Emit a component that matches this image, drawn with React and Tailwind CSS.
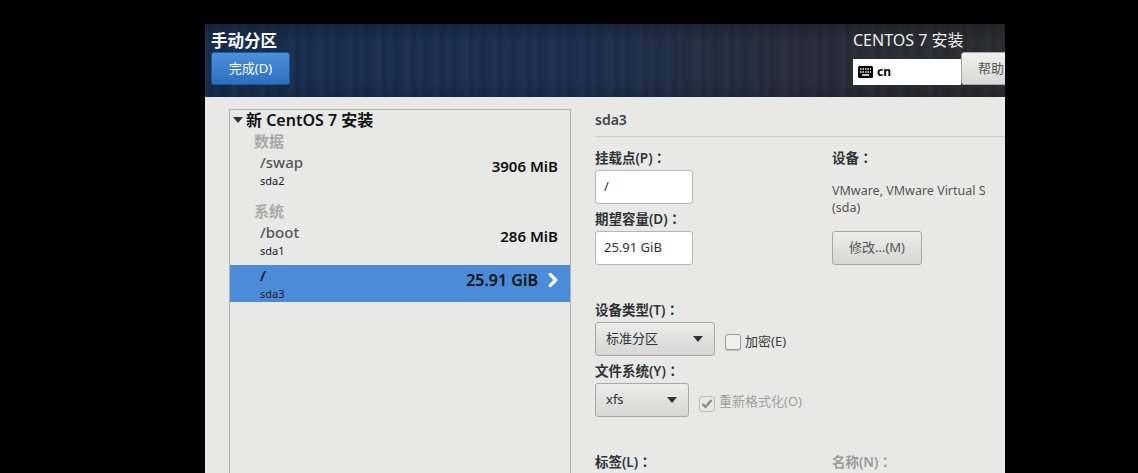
import React from "react";
import { ChevronRight } from "lucide-react";

const font = "font-['Noto_Sans','Noto_Sans_CJK_SC',sans-serif]";

// one row in the mount point list
function MountRow({ path, device, size, selected }) {
  return (
    <div className={`flex items-center h-[37px] pl-[30px] pr-[12px] ${selected ? "bg-[#4a8cd8]" : ""}`}>
      <div className="flex-1 self-start">
        <div className={`text-[15px] leading-[20px] mb-[2px] font-medium ${selected ? "text-black" : "text-[#555753]"}`}>{path}</div>
        <div className="text-[11px] leading-[14px] text-[#222]">{device}</div>
      </div>
      <div className={`font-semibold text-[#111] mb-[8px] ${selected ? "text-[16px]" : "text-[15px]"}`}>{size}</div>
      {selected && <ChevronRight size={22} strokeWidth={3.5} className="text-white ml-[4px] -mr-[6px] mb-[8px]" />}
    </div>
  );
}

// labels end in the centred full width colon
function Label({ children, className = "" }) {
  return (
    <div className={`h-[18px] text-[13.5px] leading-[16px] font-semibold text-[#2e3436] whitespace-nowrap ${className}`}>
      {children}
      <span className="font-['Noto_Sans_CJK_TC',sans-serif]">：</span>
    </div>
  );
}

function TextBox({ value }) {
  return (
    <div className="w-[98px] h-[34px] bg-white border border-[#b5b5b2] rounded-[3px] pl-[8px] flex items-center text-[13px] text-[#2e3436]">
      {value}
    </div>
  );
}

function Combo({ value, width }) {
  return (
    <div className={`${width} h-[34px] flex items-center justify-between pl-[10px] pr-[11px] border border-[#a8a8a5] rounded-[3px] bg-linear-to-b from-[#ececeb] to-[#d6d6d4] text-[13px] text-[#2e3436]`}>
      {value}
      <svg width="10" height="6" viewBox="0 0 10 6">
        <path d="M0 0h10L5 6z" fill="#2e3436" />
      </svg>
    </div>
  );
}

export default function App() {
  return (
    <div className={`w-[1138px] h-[473px] bg-black overflow-hidden pt-[24px] pl-[205px] ${font}`}>
      <div className="w-[800px] h-[449px] bg-[#e8e8e7] overflow-hidden">
        {/* header */}
        <div className="h-[73px] flex justify-between bg-[linear-gradient(180deg,rgba(0,0,0,0.2),rgba(0,0,0,0)_25%,rgba(0,0,0,0)_75%,rgba(0,0,0,0.12)),repeating-linear-gradient(90deg,rgba(255,255,255,0.03)_0px,rgba(0,0,0,0.05)_5px,rgba(255,255,255,0.02)_11px,rgba(0,0,0,0.04)_17px,rgba(255,255,255,0.025)_29px),linear-gradient(90deg,#172c4e,#1a2e50_45%,#252c3a_72%,#2a2b2e)]">
          <div className="pl-[6px] pt-[7px]">
            <div className="text-[16.5px] leading-[20px] font-bold text-white">手动分区</div>
            <div className="mt-[1px] w-[79px] h-[33px] rounded-[3px] border border-[#1c5aa0] bg-linear-to-b from-[#4b90dc] to-[#2c6fc0] flex items-center justify-center text-[13px] text-white">
              完成(D)
            </div>
          </div>
          <div className="w-[152px] pt-[6px] overflow-hidden">
            <div className="text-[16px] leading-[20px] text-[#eeeeec] whitespace-nowrap">CENTOS 7 安装</div>
            <div className="flex items-end mt-[2px]">
              <div className="w-[108px] h-[26px] bg-white flex items-center pl-[5px] gap-[4px] text-[12px] font-bold text-black shrink-0">
                <svg width="15" height="12" viewBox="0 0 15 12">
                  <rect width="15" height="12" rx="1.5" fill="#000" />
                  <path d="M2 3h1.5M4.5 3H6M7 3h1.500M9.500 3H11M12 3h1M2 6h1.500M4.500 6H6M7 6h1.500M9.500 6H11M12 6h1M4 9h7" stroke="#fff" strokeWidth="1.300" />
                </svg>
                cn
              </div>
              <div className="w-[60px] h-[33px] shrink-0 border border-[#a8a8a5] rounded-[3px] bg-linear-to-b from-[#f0f0ef] to-[#d8d8d6] flex items-center pl-[16px] text-[13px] text-[#555753]">
                帮助
              </div>
            </div>
          </div>
        </div>

        {/* body */}
        <div className="flex pl-[24px] pt-[12px]">
          <div className="w-[342px] h-[380px] border border-[#b0b0ad] shrink-0">
            <div className="flex items-center h-[20px] pl-[3px] pb-[1px] gap-[3px] text-[16px] font-semibold text-[#111]">
              <svg width="10" height="6" viewBox="0 0 10 6">
                <path d="M0 0h10L5 6z" fill="#2e3436" />
              </svg>
              新 CentOS 7 安装
            </div>
            <div className="pl-[24px] text-[15px] leading-[22px] font-bold text-[#a9a9a7]">数据</div>
            <MountRow path="/swap" device="sda2" size="3906 MiB" />
            <div className="pl-[24px] mt-[11px] text-[15px] leading-[22px] font-bold text-[#a9a9a7]">系统</div>
            <MountRow path="/boot" device="sda1" size="286 MiB" />
            <div className="mt-[6px]">
              <MountRow path="/" device="sda3" size="25.91 GiB" selected />
            </div>
          </div>

          <div className="ml-[24px] flex-1">
            <div className="h-[28px] pt-[1px] border-b border-[#cfcfcc] text-[14px] leading-[20px] font-semibold text-[#444]">sda3</div>
            <div className="flex mt-[12px]">
              <div className="w-[237px]">
                <Label>挂载点(P)</Label>
                <div className="mt-[3px]"><TextBox value="/" /></div>
                <Label className="mt-[6px]">期望容量(D)</Label>
                <div className="mt-[3px]"><TextBox value="25.91 GiB" /></div>
              </div>
              <div>
                <Label>设备</Label>
                <div className="mt-[15px] text-[12.5px] leading-[17px] text-[#555753]">
                  VMware, VMware Virtual S
                  <br />
                  (sda)
                </div>
                <div className="mt-[15px] w-[90px] h-[34px] border border-[#a8a8a5] rounded-[3px] bg-linear-to-b from-[#ececeb] to-[#d6d6d4] flex items-center justify-center text-[13px] text-[#555753]">
                  修改...(M)
                </div>
              </div>
            </div>

            <Label className="mt-[36px]">设备类型(T)</Label>
            <div className="flex items-center mt-[3px]">
              <Combo value="标准分区" width="w-[120px]" />
              <div className="ml-[10px] mt-[5px] w-[16px] h-[16px] border border-[#9a9a97] rounded-[3px] bg-[#efefee] shadow-[0_1px_0_#bbb]" />
              <span className="ml-[4px] mt-[5px] text-[13px] text-[#3a3a38]">加密(E)</span>
            </div>
            <Label className="mt-[6px]">文件系统(Y)</Label>
            <div className="flex items-center mt-[3px]">
              <Combo value="xfs" width="w-[94px]" />
              <div className="ml-[10px] mt-[7px] w-[16px] h-[16px] border border-[#bdbdba] rounded-[3px] flex items-center justify-center">
                <svg width="12" height="10" viewBox="0 0 12 10">
                  <path d="M1.500 5l3 3 6-7" fill="none" stroke="#8a8a88" strokeWidth="2.400" />
                </svg>
              </div>
              <span className="ml-[4px] mt-[3px] text-[13px] text-[#a0a09e]">重新格式化(O)</span>
            </div>

            <div className="flex mt-[36px]">
              <Label className="w-[237px]">标签(L)</Label>
              <Label className="!text-[#9a9a98]">名称(N)</Label>
            </div>
          </div>
        </div>
      </div>
    </div>
  );
}
